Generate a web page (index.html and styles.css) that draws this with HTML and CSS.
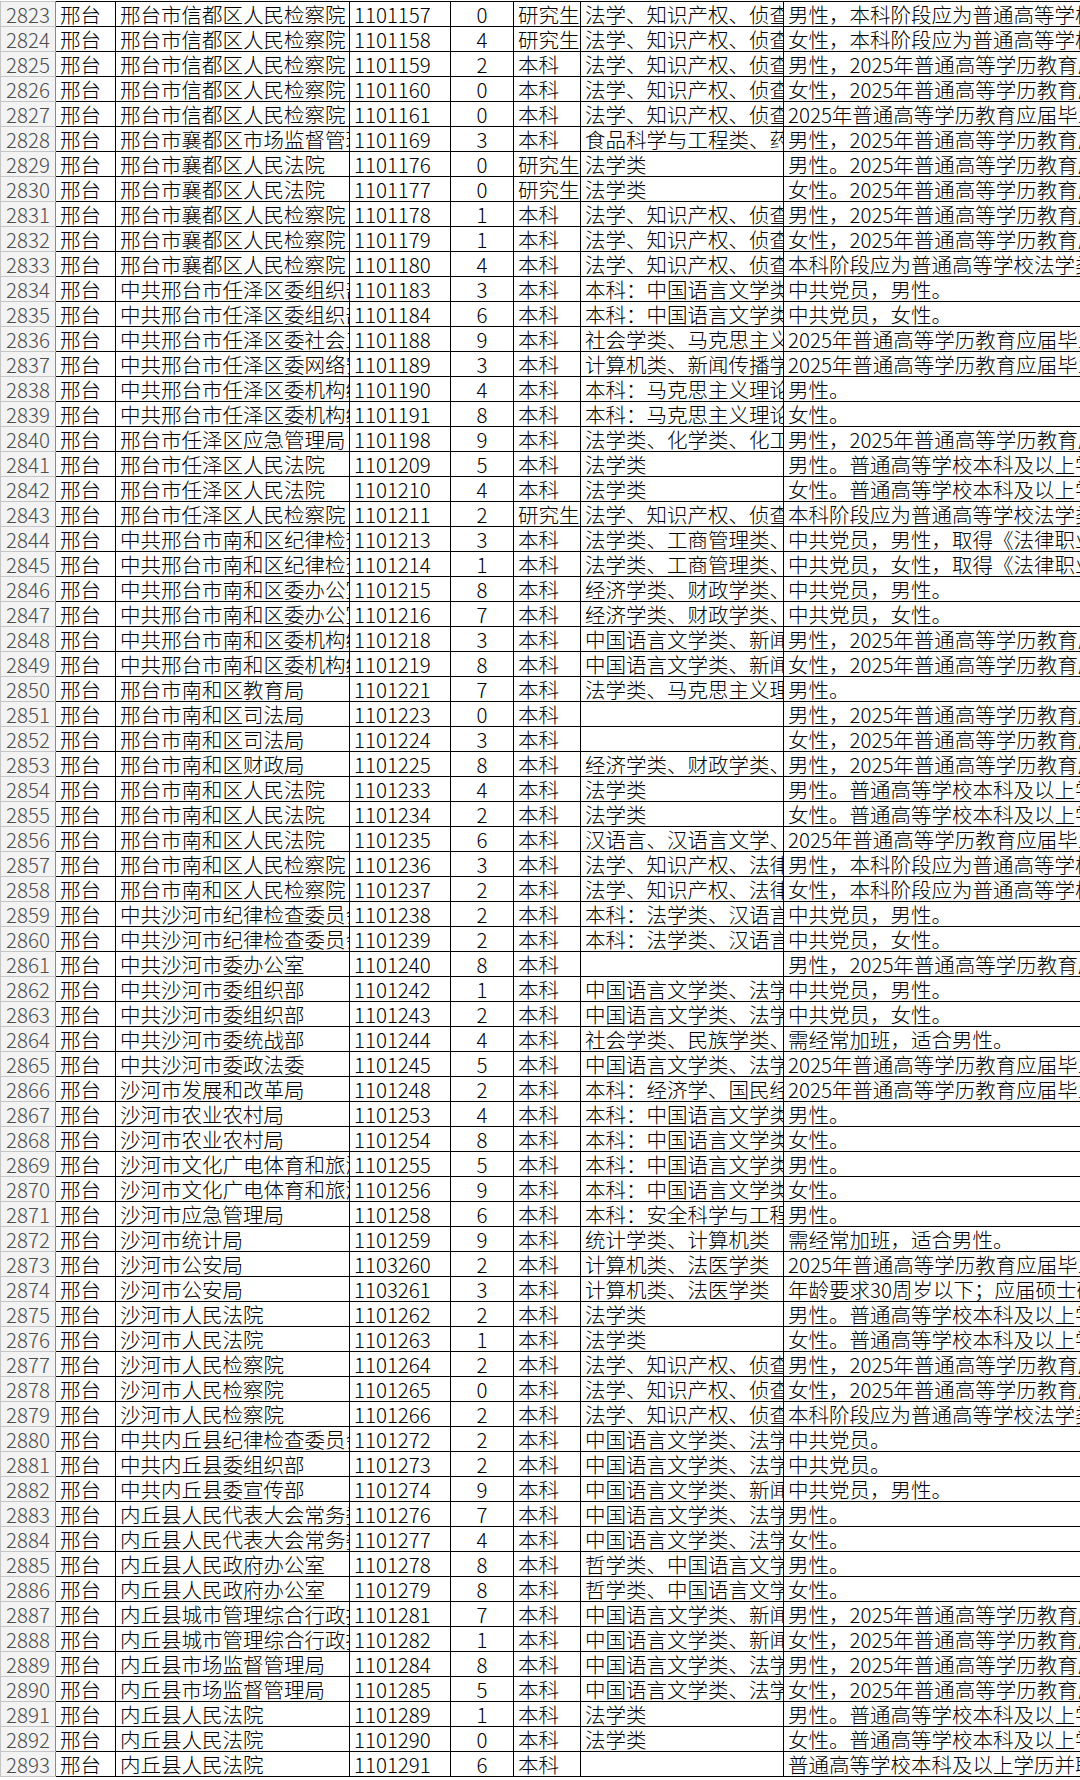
FILE: index.html
```html
<!DOCTYPE html>
<html lang="zh-CN">
<head>
<meta charset="utf-8">
<title>职位表</title>
<link rel="stylesheet" href="styles.css">
</head>
<body>
<table class="sheet">
<colgroup>
<col class="c-idx"><col class="c-city"><col class="c-unit"><col class="c-code"><col class="c-num"><col class="c-edu"><col class="c-major"><col class="c-note">
</colgroup>
<tbody>
<tr><td class="idx">2823</td><td>邢台</td><td>邢台市信都区人民检察院</td><td>1101157</td><td class="num">0</td><td>研究生</td><td>法学、知识产权、侦查学</td><td>男性，本科阶段应为普通高等学校法</td></tr>
<tr><td class="idx">2824</td><td>邢台</td><td>邢台市信都区人民检察院</td><td>1101158</td><td class="num">4</td><td>研究生</td><td>法学、知识产权、侦查学</td><td>女性，本科阶段应为普通高等学校法</td></tr>
<tr><td class="idx">2825</td><td>邢台</td><td>邢台市信都区人民检察院</td><td>1101159</td><td class="num">2</td><td>本科</td><td>法学、知识产权、侦查学</td><td>男性，2025年普通高等学历教育应届</td></tr>
<tr><td class="idx">2826</td><td>邢台</td><td>邢台市信都区人民检察院</td><td>1101160</td><td class="num">0</td><td>本科</td><td>法学、知识产权、侦查学</td><td>女性，2025年普通高等学历教育应届</td></tr>
<tr><td class="idx">2827</td><td>邢台</td><td>邢台市信都区人民检察院</td><td>1101161</td><td class="num">0</td><td>本科</td><td>法学、知识产权、侦查学</td><td>2025年普通高等学历教育应届毕业生</td></tr>
<tr><td class="idx">2828</td><td>邢台</td><td>邢台市襄都区市场监督管理</td><td>1101169</td><td class="num">3</td><td>本科</td><td>食品科学与工程类、药学</td><td>男性，2025年普通高等学历教育应届</td></tr>
<tr><td class="idx">2829</td><td>邢台</td><td>邢台市襄都区人民法院</td><td>1101176</td><td class="num">0</td><td>研究生</td><td>法学类</td><td>男性。2025年普通高等学历教育应届</td></tr>
<tr><td class="idx">2830</td><td>邢台</td><td>邢台市襄都区人民法院</td><td>1101177</td><td class="num">0</td><td>研究生</td><td>法学类</td><td>女性。2025年普通高等学历教育应届</td></tr>
<tr><td class="idx">2831</td><td>邢台</td><td>邢台市襄都区人民检察院</td><td>1101178</td><td class="num">1</td><td>本科</td><td>法学、知识产权、侦查学</td><td>男性，2025年普通高等学历教育应届</td></tr>
<tr><td class="idx">2832</td><td>邢台</td><td>邢台市襄都区人民检察院</td><td>1101179</td><td class="num">1</td><td>本科</td><td>法学、知识产权、侦查学</td><td>女性，2025年普通高等学历教育应届</td></tr>
<tr><td class="idx">2833</td><td>邢台</td><td>邢台市襄都区人民检察院</td><td>1101180</td><td class="num">4</td><td>本科</td><td>法学、知识产权、侦查学</td><td>本科阶段应为普通高等学校法学类</td></tr>
<tr><td class="idx">2834</td><td>邢台</td><td>中共邢台市任泽区委组织部</td><td>1101183</td><td class="num">3</td><td>本科</td><td>本科：中国语言文学类</td><td>中共党员，男性。</td></tr>
<tr><td class="idx">2835</td><td>邢台</td><td>中共邢台市任泽区委组织部</td><td>1101184</td><td class="num">6</td><td>本科</td><td>本科：中国语言文学类</td><td>中共党员，女性。</td></tr>
<tr><td class="idx">2836</td><td>邢台</td><td>中共邢台市任泽区委社会工</td><td>1101188</td><td class="num">9</td><td>本科</td><td>社会学类、马克思主义理</td><td>2025年普通高等学历教育应届毕业生</td></tr>
<tr><td class="idx">2837</td><td>邢台</td><td>中共邢台市任泽区委网络安</td><td>1101189</td><td class="num">3</td><td>本科</td><td>计算机类、新闻传播学类</td><td>2025年普通高等学历教育应届毕业生</td></tr>
<tr><td class="idx">2838</td><td>邢台</td><td>中共邢台市任泽区委机构编</td><td>1101190</td><td class="num">4</td><td>本科</td><td>本科：马克思主义理论类</td><td>男性。</td></tr>
<tr><td class="idx">2839</td><td>邢台</td><td>中共邢台市任泽区委机构编</td><td>1101191</td><td class="num">8</td><td>本科</td><td>本科：马克思主义理论类</td><td>女性。</td></tr>
<tr><td class="idx">2840</td><td>邢台</td><td>邢台市任泽区应急管理局</td><td>1101198</td><td class="num">9</td><td>本科</td><td>法学类、化学类、化工与</td><td>男性，2025年普通高等学历教育应届</td></tr>
<tr><td class="idx">2841</td><td>邢台</td><td>邢台市任泽区人民法院</td><td>1101209</td><td class="num">5</td><td>本科</td><td>法学类</td><td>男性。普通高等学校本科及以上学</td></tr>
<tr><td class="idx">2842</td><td>邢台</td><td>邢台市任泽区人民法院</td><td>1101210</td><td class="num">4</td><td>本科</td><td>法学类</td><td>女性。普通高等学校本科及以上学</td></tr>
<tr><td class="idx">2843</td><td>邢台</td><td>邢台市任泽区人民检察院</td><td>1101211</td><td class="num">2</td><td>研究生</td><td>法学、知识产权、侦查学</td><td>本科阶段应为普通高等学校法学类</td></tr>
<tr><td class="idx">2844</td><td>邢台</td><td>中共邢台市南和区纪律检查</td><td>1101213</td><td class="num">3</td><td>本科</td><td>法学类、工商管理类、中</td><td>中共党员，男性，取得《法律职业资</td></tr>
<tr><td class="idx">2845</td><td>邢台</td><td>中共邢台市南和区纪律检查</td><td>1101214</td><td class="num">1</td><td>本科</td><td>法学类、工商管理类、中</td><td>中共党员，女性，取得《法律职业资</td></tr>
<tr><td class="idx">2846</td><td>邢台</td><td>中共邢台市南和区委办公室</td><td>1101215</td><td class="num">8</td><td>本科</td><td>经济学类、财政学类、金</td><td>中共党员，男性。</td></tr>
<tr><td class="idx">2847</td><td>邢台</td><td>中共邢台市南和区委办公室</td><td>1101216</td><td class="num">7</td><td>本科</td><td>经济学类、财政学类、金</td><td>中共党员，女性。</td></tr>
<tr><td class="idx">2848</td><td>邢台</td><td>中共邢台市南和区委机构编</td><td>1101218</td><td class="num">3</td><td>本科</td><td>中国语言文学类、新闻传</td><td>男性，2025年普通高等学历教育应届</td></tr>
<tr><td class="idx">2849</td><td>邢台</td><td>中共邢台市南和区委机构编</td><td>1101219</td><td class="num">8</td><td>本科</td><td>中国语言文学类、新闻传</td><td>女性，2025年普通高等学历教育应届</td></tr>
<tr><td class="idx">2850</td><td>邢台</td><td>邢台市南和区教育局</td><td>1101221</td><td class="num">7</td><td>本科</td><td>法学类、马克思主义理论</td><td>男性。</td></tr>
<tr><td class="idx">2851</td><td>邢台</td><td>邢台市南和区司法局</td><td>1101223</td><td class="num">0</td><td>本科</td><td></td><td>男性，2025年普通高等学历教育应届</td></tr>
<tr><td class="idx">2852</td><td>邢台</td><td>邢台市南和区司法局</td><td>1101224</td><td class="num">3</td><td>本科</td><td></td><td>女性，2025年普通高等学历教育应届</td></tr>
<tr><td class="idx">2853</td><td>邢台</td><td>邢台市南和区财政局</td><td>1101225</td><td class="num">8</td><td>本科</td><td>经济学类、财政学类、金</td><td>男性，2025年普通高等学历教育应届</td></tr>
<tr><td class="idx">2854</td><td>邢台</td><td>邢台市南和区人民法院</td><td>1101233</td><td class="num">4</td><td>本科</td><td>法学类</td><td>男性。普通高等学校本科及以上学</td></tr>
<tr><td class="idx">2855</td><td>邢台</td><td>邢台市南和区人民法院</td><td>1101234</td><td class="num">2</td><td>本科</td><td>法学类</td><td>女性。普通高等学校本科及以上学</td></tr>
<tr><td class="idx">2856</td><td>邢台</td><td>邢台市南和区人民法院</td><td>1101235</td><td class="num">6</td><td>本科</td><td>汉语言、汉语言文学、秘</td><td>2025年普通高等学历教育应届毕业生</td></tr>
<tr><td class="idx">2857</td><td>邢台</td><td>邢台市南和区人民检察院</td><td>1101236</td><td class="num">3</td><td>本科</td><td>法学、知识产权、法律</td><td>男性，本科阶段应为普通高等学校法</td></tr>
<tr><td class="idx">2858</td><td>邢台</td><td>邢台市南和区人民检察院</td><td>1101237</td><td class="num">2</td><td>本科</td><td>法学、知识产权、法律</td><td>女性，本科阶段应为普通高等学校法</td></tr>
<tr><td class="idx">2859</td><td>邢台</td><td>中共沙河市纪律检查委员会</td><td>1101238</td><td class="num">2</td><td>本科</td><td>本科：法学类、汉语言文</td><td>中共党员，男性。</td></tr>
<tr><td class="idx">2860</td><td>邢台</td><td>中共沙河市纪律检查委员会</td><td>1101239</td><td class="num">2</td><td>本科</td><td>本科：法学类、汉语言文</td><td>中共党员，女性。</td></tr>
<tr><td class="idx">2861</td><td>邢台</td><td>中共沙河市委办公室</td><td>1101240</td><td class="num">8</td><td>本科</td><td></td><td>男性，2025年普通高等学历教育应届</td></tr>
<tr><td class="idx">2862</td><td>邢台</td><td>中共沙河市委组织部</td><td>1101242</td><td class="num">1</td><td>本科</td><td>中国语言文学类、法学类</td><td>中共党员，男性。</td></tr>
<tr><td class="idx">2863</td><td>邢台</td><td>中共沙河市委组织部</td><td>1101243</td><td class="num">2</td><td>本科</td><td>中国语言文学类、法学类</td><td>中共党员，女性。</td></tr>
<tr><td class="idx">2864</td><td>邢台</td><td>中共沙河市委统战部</td><td>1101244</td><td class="num">4</td><td>本科</td><td>社会学类、民族学类、政</td><td>需经常加班，适合男性。</td></tr>
<tr><td class="idx">2865</td><td>邢台</td><td>中共沙河市委政法委</td><td>1101245</td><td class="num">5</td><td>本科</td><td>中国语言文学类、法学类</td><td>2025年普通高等学历教育应届毕业生</td></tr>
<tr><td class="idx">2866</td><td>邢台</td><td>沙河市发展和改革局</td><td>1101248</td><td class="num">2</td><td>本科</td><td>本科：经济学、国民经济</td><td>2025年普通高等学历教育应届毕业生</td></tr>
<tr><td class="idx">2867</td><td>邢台</td><td>沙河市农业农村局</td><td>1101253</td><td class="num">4</td><td>本科</td><td>本科：中国语言文学类</td><td>男性。</td></tr>
<tr><td class="idx">2868</td><td>邢台</td><td>沙河市农业农村局</td><td>1101254</td><td class="num">8</td><td>本科</td><td>本科：中国语言文学类</td><td>女性。</td></tr>
<tr><td class="idx">2869</td><td>邢台</td><td>沙河市文化广电体育和旅游</td><td>1101255</td><td class="num">5</td><td>本科</td><td>本科：中国语言文学类</td><td>男性。</td></tr>
<tr><td class="idx">2870</td><td>邢台</td><td>沙河市文化广电体育和旅游</td><td>1101256</td><td class="num">9</td><td>本科</td><td>本科：中国语言文学类</td><td>女性。</td></tr>
<tr><td class="idx">2871</td><td>邢台</td><td>沙河市应急管理局</td><td>1101258</td><td class="num">6</td><td>本科</td><td>本科：安全科学与工程类</td><td>男性。</td></tr>
<tr><td class="idx">2872</td><td>邢台</td><td>沙河市统计局</td><td>1101259</td><td class="num">9</td><td>本科</td><td>统计学类、计算机类</td><td>需经常加班，适合男性。</td></tr>
<tr><td class="idx">2873</td><td>邢台</td><td>沙河市公安局</td><td>1103260</td><td class="num">2</td><td>本科</td><td>计算机类、法医学类</td><td>2025年普通高等学历教育应届毕业生</td></tr>
<tr><td class="idx">2874</td><td>邢台</td><td>沙河市公安局</td><td>1103261</td><td class="num">3</td><td>本科</td><td>计算机类、法医学类</td><td>年龄要求30周岁以下；应届硕士研</td></tr>
<tr><td class="idx">2875</td><td>邢台</td><td>沙河市人民法院</td><td>1101262</td><td class="num">2</td><td>本科</td><td>法学类</td><td>男性。普通高等学校本科及以上学</td></tr>
<tr><td class="idx">2876</td><td>邢台</td><td>沙河市人民法院</td><td>1101263</td><td class="num">1</td><td>本科</td><td>法学类</td><td>女性。普通高等学校本科及以上学</td></tr>
<tr><td class="idx">2877</td><td>邢台</td><td>沙河市人民检察院</td><td>1101264</td><td class="num">2</td><td>本科</td><td>法学、知识产权、侦查学</td><td>男性，2025年普通高等学历教育应届</td></tr>
<tr><td class="idx">2878</td><td>邢台</td><td>沙河市人民检察院</td><td>1101265</td><td class="num">0</td><td>本科</td><td>法学、知识产权、侦查学</td><td>女性，2025年普通高等学历教育应届</td></tr>
<tr><td class="idx">2879</td><td>邢台</td><td>沙河市人民检察院</td><td>1101266</td><td class="num">2</td><td>本科</td><td>法学、知识产权、侦查学</td><td>本科阶段应为普通高等学校法学类</td></tr>
<tr><td class="idx">2880</td><td>邢台</td><td>中共内丘县纪律检查委员会</td><td>1101272</td><td class="num">2</td><td>本科</td><td>中国语言文学类、法学类</td><td>中共党员。</td></tr>
<tr><td class="idx">2881</td><td>邢台</td><td>中共内丘县委组织部</td><td>1101273</td><td class="num">2</td><td>本科</td><td>中国语言文学类、法学类</td><td>中共党员。</td></tr>
<tr><td class="idx">2882</td><td>邢台</td><td>中共内丘县委宣传部</td><td>1101274</td><td class="num">9</td><td>本科</td><td>中国语言文学类、新闻传</td><td>中共党员，男性。</td></tr>
<tr><td class="idx">2883</td><td>邢台</td><td>内丘县人民代表大会常务委</td><td>1101276</td><td class="num">7</td><td>本科</td><td>中国语言文学类、法学类</td><td>男性。</td></tr>
<tr><td class="idx">2884</td><td>邢台</td><td>内丘县人民代表大会常务委</td><td>1101277</td><td class="num">4</td><td>本科</td><td>中国语言文学类、法学类</td><td>女性。</td></tr>
<tr><td class="idx">2885</td><td>邢台</td><td>内丘县人民政府办公室</td><td>1101278</td><td class="num">8</td><td>本科</td><td>哲学类、中国语言文学类</td><td>男性。</td></tr>
<tr><td class="idx">2886</td><td>邢台</td><td>内丘县人民政府办公室</td><td>1101279</td><td class="num">8</td><td>本科</td><td>哲学类、中国语言文学类</td><td>女性。</td></tr>
<tr><td class="idx">2887</td><td>邢台</td><td>内丘县城市管理综合行政执</td><td>1101281</td><td class="num">7</td><td>本科</td><td>中国语言文学类、新闻传</td><td>男性，2025年普通高等学历教育应届</td></tr>
<tr><td class="idx">2888</td><td>邢台</td><td>内丘县城市管理综合行政执</td><td>1101282</td><td class="num">1</td><td>本科</td><td>中国语言文学类、新闻传</td><td>女性，2025年普通高等学历教育应届</td></tr>
<tr><td class="idx">2889</td><td>邢台</td><td>内丘县市场监督管理局</td><td>1101284</td><td class="num">8</td><td>本科</td><td>中国语言文学类、法学类</td><td>男性，2025年普通高等学历教育应届</td></tr>
<tr><td class="idx">2890</td><td>邢台</td><td>内丘县市场监督管理局</td><td>1101285</td><td class="num">5</td><td>本科</td><td>中国语言文学类、法学类</td><td>女性，2025年普通高等学历教育应届</td></tr>
<tr><td class="idx">2891</td><td>邢台</td><td>内丘县人民法院</td><td>1101289</td><td class="num">1</td><td>本科</td><td>法学类</td><td>男性。普通高等学校本科及以上学</td></tr>
<tr><td class="idx">2892</td><td>邢台</td><td>内丘县人民法院</td><td>1101290</td><td class="num">0</td><td>本科</td><td>法学类</td><td>女性。普通高等学校本科及以上学</td></tr>
<tr><td class="idx">2893</td><td>邢台</td><td>内丘县人民法院</td><td>1101291</td><td class="num">6</td><td>本科</td><td></td><td>普通高等学校本科及以上学历并取</td></tr>
</tbody>
</table>
</body>
</html>
```

FILE: styles.css
```css
html, body {
  margin: 0;
  padding: 0;
  background: #ffffff;
  overflow: hidden;
}

body {
  font-family: "Noto Sans CJK SC", "Noto Sans", sans-serif;
  color: #000;
}

.sheet {
  border-collapse: collapse;
  table-layout: fixed;
  width: 1081px;
  margin-top: 1px;
}

.c-idx { width: 55px; }
.c-city { width: 60px; }
.c-unit { width: 234px; }
.c-code { width: 101px; }
.c-num { width: 63px; }
.c-edu { width: 67px; }
.c-major { width: 203px; }
.c-note { width: 298px; }

.sheet td {
  height: 25px;
  padding: 0 4px;
  border: 1px solid #000;
  white-space: nowrap;
  overflow-x: clip;
  overflow-y: visible;
  text-overflow: clip;
  font-size: 20.5px;
  font-weight: 300;
  line-height: 23px;
  vertical-align: middle;
  box-sizing: border-box;
}

.sheet td.idx {
  background: #f3f3f3;
  color: #4d4d4d;
  text-align: center;
  padding: 0;
  border-top-color: #c4c4c4;
  border-bottom-color: #c4c4c4;
  border-left-color: #c4c4c4;
  border-right-color: #8a8a8a;
}

.sheet td.num {
  text-align: center;
}
```
